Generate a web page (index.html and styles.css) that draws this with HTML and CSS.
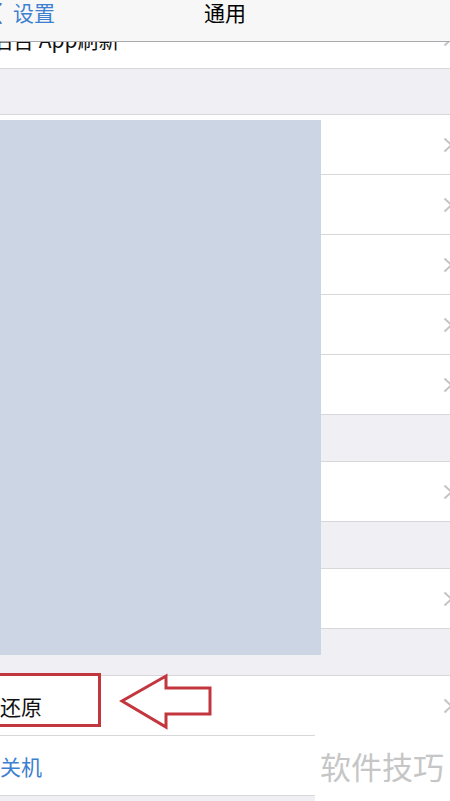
FILE: index.html
```html
<!DOCTYPE html>
<html lang="zh-CN">
<head>
    <meta charset="UTF-8">
    <meta name="viewport" content="width=device-width, initial-scale=1.0">
    <title>通用</title>
    <link rel="stylesheet" href="styles.css">
</head>
<body>
    <div class="screen">
        <header class="nav">
            <div class="back">
                <svg class="back-icon" width="12" height="21" viewBox="0 0 12 21">
                    <path d="M10.5 1 L1.5 10.5 L10.5 20" fill="none" stroke="#3c80cf" stroke-width="2.5" stroke-linecap="round" stroke-linejoin="round"/>
                </svg>
                <span>设置</span>
            </div>
            <div class="nav-title">通用</div>
            <div></div>
        </header>

        <div class="row-cut">
            <div class="row">
                <span class="label label-shift">后台 App刷新</span>
                <svg class="chevron" width="10" height="16" viewBox="0 0 10 16"><path d="M1.5 1.5 L8.5 8 L1.5 14.5"/></svg>
            </div>
        </div>

        <div class="group">
            <div class="row"><span class="label"></span><svg class="chevron" width="10" height="16" viewBox="0 0 10 16"><path d="M1.5 1.5 L8.5 8 L1.5 14.5"/></svg></div>
            <div class="row"><span class="label"></span><svg class="chevron" width="10" height="16" viewBox="0 0 10 16"><path d="M1.5 1.5 L8.5 8 L1.5 14.5"/></svg></div>
            <div class="row"><span class="label"></span><svg class="chevron" width="10" height="16" viewBox="0 0 10 16"><path d="M1.5 1.5 L8.5 8 L1.5 14.5"/></svg></div>
            <div class="row"><span class="label"></span><svg class="chevron" width="10" height="16" viewBox="0 0 10 16"><path d="M1.5 1.5 L8.5 8 L1.5 14.5"/></svg></div>
            <div class="row"><span class="label"></span><svg class="chevron" width="10" height="16" viewBox="0 0 10 16"><path d="M1.5 1.5 L8.5 8 L1.5 14.5"/></svg></div>
        </div>

        <div class="group">
            <div class="row"><span class="label"></span><svg class="chevron" width="10" height="16" viewBox="0 0 10 16"><path d="M1.5 1.5 L8.5 8 L1.5 14.5"/></svg></div>
        </div>

        <div class="group">
            <div class="row"><span class="label"></span><svg class="chevron" width="10" height="16" viewBox="0 0 10 16"><path d="M1.5 1.5 L8.5 8 L1.5 14.5"/></svg></div>
        </div>

        <div class="group">
            <div class="row row-reset">
                <span class="label">还原</span>
                <svg class="chevron" width="10" height="16" viewBox="0 0 10 16"><path d="M1.5 1.5 L8.5 8 L1.5 14.5"/></svg>
                <div class="mark-box"></div>
                <svg class="mark-arrow" width="96" height="59" viewBox="0 0 96 59">
                    <polygon points="4,29 48,4 48,16 92,16 92,42 48,42 48,55" fill="none" stroke="#c3363e" stroke-width="3" stroke-linejoin="miter"/>
                </svg>
            </div>
            <div class="row">
                <span class="label label-blue">关机</span>
            </div>
        </div>

        <div class="redact"></div>
        <div class="watermark">软件技巧</div>
    </div>
</body>
</html>
```

FILE: styles.css
```css
body {
    margin: 0;
    background: #efeff4;
    font-family: "Noto Sans CJK SC", "Noto Sans", sans-serif;
    overflow: hidden;
}
.screen {
    position: relative;
    width: 450px;
    height: 801px;
    overflow: hidden;
    background: #efeff4;
}
.nav {
    display: grid;
    grid-template-columns: 1fr auto 1fr;
    height: 41px;
    background: #f7f7f8;
    border-bottom: 1px solid #a9a9ad;
    font-size: 21px;
    line-height: 24px;
}
.back {
    display: flex;
    align-items: flex-start;
    color: #3c80cf;
}
.back-icon {
    margin-left: -10px;
    margin-top: 3px;
    margin-right: 11px;
    flex-shrink: 0;
}
.nav-title {
    color: #000;
}
.row-cut {
    height: 26px;
    overflow: hidden;
    background: #fff;
    border-bottom: 1px solid #d8d8dc;
    margin-bottom: 45px;
}
.row-cut .row {
    margin-top: -33px;
    border-bottom: none;
}
.group {
    background: #fff;
    border-top: 1px solid #d8d8dc;
    margin-bottom: 46px;
}
.row {
    display: flex;
    align-items: center;
    justify-content: space-between;
    height: 59px;
    border-bottom: 1px solid #d8d8dc;
    background: #fff;
}
.label {
    font-size: 21px;
    color: #111;
    white-space: nowrap;
}
.label-shift {
    margin-left: -8px;
}
.label-blue {
    color: #3c80cf;
}
.chevron {
    margin-right: -3px;
    flex-shrink: 0;
}
.chevron path {
    fill: none;
    stroke: #c4c4c9;
    stroke-width: 2;
}
.row-reset {
    position: relative;
}
.mark-box {
    position: absolute;
    left: -3px;
    top: -3px;
    width: 104px;
    height: 54px;
    box-sizing: border-box;
    border: 3px solid #c3363e;
}
.mark-arrow {
    position: absolute;
    left: 118px;
    top: -4px;
}
.redact {
    position: absolute;
    left: 0;
    top: 120px;
    width: 321px;
    height: 535px;
    background: #cbd5e3;
}
.watermark {
    position: absolute;
    left: 315px;
    top: 735px;
    right: 0;
    bottom: 0;
    display: flex;
    align-items: center;
    padding-left: 5px;
    padding-bottom: 6px;
    box-sizing: border-box;
    background: #fff;
    color: #c6c6c6;
    font-size: 31px;
    white-space: nowrap;
}
```
